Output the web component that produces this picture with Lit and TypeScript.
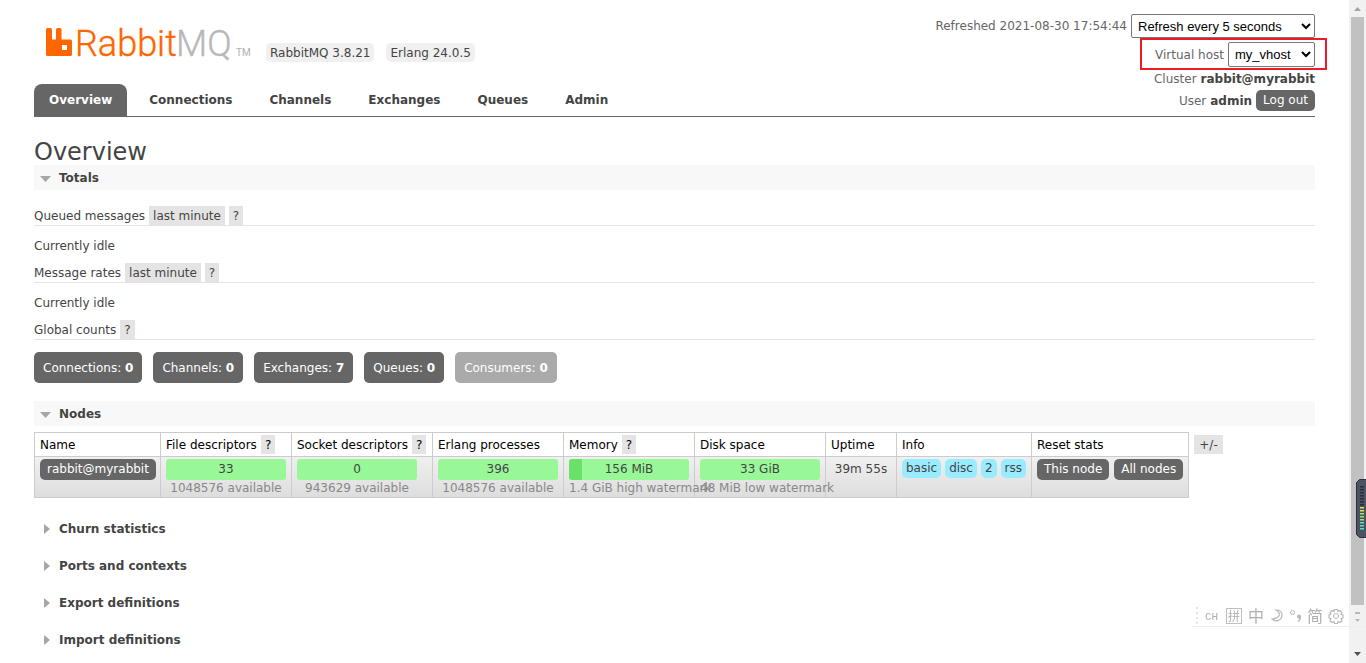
import { LitElement, html, css, svg, nothing } from "lit";
import { customElement, property, state } from "lit/decorators.js";
import { classMap } from "lit/directives/class-map.js";

const TABS = ["Overview", "Connections", "Channels", "Exchanges", "Queues", "Admin"];

const COUNTS = [
  { label: "Connections", value: 0 },
  { label: "Channels", value: 0 },
  { label: "Exchanges", value: 7 },
  { label: "Queues", value: 0 },
  { label: "Consumers", value: 0, disabled: true },
];

const COLUMNS = [
  { title: "Name", cls: "c-name" },
  { title: "File descriptors", help: true, cls: "c-bar" },
  { title: "Socket descriptors", help: true, cls: "c-socket" },
  { title: "Erlang processes", cls: "c-bar" },
  { title: "Memory", help: true, cls: "c-bar" },
  { title: "Disk space", cls: "c-bar" },
  { title: "Uptime", cls: "c-uptime" },
  { title: "Info", cls: "c-info" },
  { title: "Reset stats", cls: "c-reset" },
];

const BARS = [
  { value: "33", note: "1048576 available", used: 0 },
  { value: "0", note: "943629 available", used: 0 },
  { value: "396", note: "1048576 available", used: 0 },
  { value: "156 MiB", note: "1.4 GiB high watermark", used: 11 },
  { value: "33 GiB", note: "48 MiB low watermark", used: 0 },
];

const CLOSED = ["Churn statistics", "Ports and contexts", "Export definitions", "Import definitions"];

@customElement("section-heading")
class SectionHeading extends LitElement {
  @property() label = "";
  @property({ type: Boolean }) open = false;

  static styles = css`
    :host { display: block; }
    .heading { margin: 0; font-size: 12px; line-height: 25px; }
    .toggle {
      display: flex; align-items: center; box-sizing: border-box; width: 100%; height: 25px;
      margin: 0; padding: 2px 0 0 6px; border: 0; gap: 8px; background: none;
      font: bold 12px/23px "DejaVu Sans", Verdana, sans-serif; color: #444;
      text-align: left; cursor: pointer;
    }
    .toggle.open { background: #f8f8f8; }
    .arrow { width: 11px; height: 12px; fill: #a6a6a6; }
  `;

  render() {
    return html`<h2 class="heading">
      <button class=${classMap({ toggle: true, open: this.open })} aria-expanded=${this.open}>
        <svg class="arrow" viewBox="0 0 11 12" aria-hidden="true">
          <path d=${this.open ? "M0 3h11L5.5 9z" : "M4 0l6 5L4 10z"} />
        </svg>${this.label}
      </button>
    </h2>`;
  }
}

@customElement("scroll-rail")
class ScrollRail extends LitElement {
  static styles = css`
    :host { display: flex; flex-direction: column; align-items: center; background: #f1f1f1; }
    .end { width: 17px; height: 17px; }
    .thumb { width: 13px; flex: 1; background: #c1c1c1; }
    .rest { height: 41px; }
  `;

  render() {
    return html`
      <svg class="end" viewBox="0 0 17 17"><path fill="#a3a3a3" d="M5 11h7L8.5 7z" /></svg>
      <div class="thumb"></div>
      <div class="rest"></div>
      <svg class="end" viewBox="0 0 17 17"><path fill="#505050" d="M5 6h7l-3.500 4z" /></svg>
    `;
  }
}

@customElement("app-root")
class AppRoot extends LitElement {
  @state() private tab = "Overview";

  static styles = css`
    :host {
      display: flex; min-height: 100vh; background: #fff; color: #444;
      font: 12px/20px "DejaVu Sans", Verdana, sans-serif;
    }
    * { box-sizing: border-box; }
    .page { flex: 1; min-width: 0; padding: 14px 34px 10px; }
    .rail { flex: none; width: 17px; }

    .header { display: flex; justify-content: space-between; border-bottom: 1px solid #666; }
    .left { display: flex; flex-direction: column; justify-content: space-between; }
    .brand { display: flex; align-items: flex-end; padding-top: 8px; }
    .logo { display: block; width: 220px; height: 42px; }
    .logo-text { font-family: Roboto, sans-serif; font-size: 36px; font-weight: 300; stroke-width: 0.4px; }
    .rabbit { fill: #f60; stroke: #f60; }
    .mq { fill: #b8b8b8; stroke: #b8b8b8; }
    .logo-tm { font-family: Roboto, sans-serif; font-size: 10px; fill: #b0b0b0; }
    .versions { display: flex; gap: 12px; padding: 0 0 2px 12px; }
    .chip { height: 19px; padding: 0 4px; border-radius: 5px; background: #f0f0f0; line-height: 21px; }
    .tabs { display: flex; gap: 7px; margin: 0; padding: 0; list-style: none; }
    .tab {
      display: block; height: 32px; padding: 0 15px; border-radius: 8px 8px 0 0;
      font-weight: bold; line-height: 33px; color: #444; text-decoration: none;
    }
    .tab.active { background: #666; color: #fff; }

    .status { display: flex; flex-direction: column; align-items: flex-end; color: #666; padding-bottom: 5px; }
    .status-row { display: flex; align-items: center; gap: 4px; }
    .status-row b { color: #444; }
    .vhost { position: relative; height: 25px; margin: 4px 0 2px; }
    .mark { position: absolute; inset: -4px -12px -3px -15px; border: 2px solid #ed1c24; pointer-events: none; }
    .select {
      height: 24px; padding: 0 2px; border: 1px solid #767676; border-radius: 2px;
      background: #fff; color: #000; font: 13px "Liberation Sans", Arial, sans-serif;
    }
    .refresh { width: 184px; }
    .host { width: 87px; height: 25px; }
    .user { padding-top: 1px; }
    .btn {
      display: inline-block; height: 21px; padding: 0 7px; border: 0; border-radius: 5px; background: #666;
      color: #fff; font: 12px/21px "DejaVu Sans", Verdana, sans-serif; white-space: nowrap;
      text-decoration: none; cursor: pointer;
    }

    .title { margin: 22px 0 0; font-size: 24px; font-weight: normal; line-height: 26px; }
    .sub {
      display: flex; gap: 4px; height: 20px; margin: 0; border-bottom: 1px solid #e4e4e4;
      font-size: 12px; font-weight: normal; line-height: 21px;
    }
    .sub.first { margin-top: 16px; }
    .idle { margin: 0; padding: 10px 0 7px; }
    .tag {
      height: 19px; padding: 1px 4px 0; border: 0; background: #e4e4e4; color: #444;
      font: 12px/19px "DejaVu Sans", Verdana, sans-serif; cursor: pointer;
    }
    .counts { display: flex; gap: 11px; margin: 12px 0 18px; }
    .count {
      height: 31px; padding: 0 9px; border-radius: 5px; background: #666; color: #fff;
      line-height: 32px; text-decoration: none;
    }
    .count.disabled { background: #aaa; }

    .nodes { display: flex; align-items: flex-start; gap: 5px; margin: 6px 0 18px; }
    .nodes > .tag { min-width: 29px; margin-top: 3px; }
    .table { width: 1155px; table-layout: fixed; border-collapse: collapse; }
    .c-name { width: 126px; }
    .c-bar { width: 131px; }
    .c-socket { width: 141px; }
    .c-uptime { width: 71px; }
    .c-info { width: 135px; }
    .c-reset { width: 157px; }
    th, td { border: 1px solid #ccc; padding: 2px 5px; text-align: left; font-weight: normal; white-space: nowrap; }
    th { height: 24px; padding: 2px 0 2px 5px; color: #000; line-height: 21px; }
    th .group { height: 19px; }
    th .tag { color: #000; }
    td { height: 41px; padding: 2px 0 0 5px; vertical-align: top; }
    .row { background: linear-gradient(#f0f0f0, #ddd); }
    .group { display: flex; gap: 4px; }
    .resets { gap: 5px; }
    .gauge { width: 120px; }
    .bar { position: relative; height: 21px; border-radius: 3px; background: #98f898; overflow: hidden; line-height: 21px; text-align: center; }
    .used { position: absolute; inset: 0 auto 0 0; background: #6ae26a; }
    .val { position: relative; }
    .note { line-height: 16px; color: #888; text-align: center; }
    .uptime { text-align: center; padding-left: 0; }
    .info { height: 19px; padding: 0 4px; border-radius: 5px; background: #99ebff; line-height: 19px; }
    .closed { display: flex; flex-direction: column; gap: 12px; }

    .gadget { position: fixed; right: 0; top: 479px; width: 10px; height: 59px; }
    .ime { position: fixed; right: 0; bottom: 36px; width: 174px; height: 24px; }
    .ime text { font-family: "Noto Sans CJK SC", sans-serif; fill: #b0b0b0; }
    .ime .lang { font-family: "Liberation Mono", monospace; }
  `;

  private logo() {
    return html`<svg class="logo" viewBox="0 0 220 42" role="img" aria-label="RabbitMQ">
      <path fill="#f60" fill-rule="evenodd" d="M13.500 6h3a1.500 1.500 0 0 1 1.500 1.500v10h4V7.500a1.500 1.500 0 0 1 1.500-1.500h2.500a1.500 1.500 0 0 1 1.500 1.500v10h9a1.500 1.500 0 0 1 1.500 1.500v13.500a1.500 1.500 0 0 1-1.500 1.500h-23a1.500 1.500 0 0 1-1.500-1.500V7.500a1.500 1.500 0 0 1 1.500-1.500zm14.500 17v5h5v-5z" />
      <text class="logo-text rabbit" x="41" y="34">Rabbit</text>
      <text class="logo-text mq" x="142" y="34">MQ</text>
      <text class="logo-tm" x="202" y="34">TM</text>
    </svg>`;
  }

  private gadget() {
    return html`<svg class="gadget" viewBox="0 0 10 59" aria-hidden="true">
      <path fill="#4d5263" stroke="#2e313c" d="M11 .5H3.500L.5 3.500v52l3 3H11z" />
      ${Array.from({ length: 15 }, (_, i) => {
        const fill = i < 7 ? "#2b2e38" : i < 9 ? "#e3e04f" : i < 12 ? "#9ce070" : "#4fe0c0";
        return svg`<rect x="4" y=${7 + i * 3} width="4" height="1.500" fill=${fill} />`;
      })}
    </svg>`;
  }

  private ime() {
    return html`<svg class="ime" viewBox="0 0 174 24" aria-hidden="true">
      <path stroke="#eee" d="M0 23.500h174" />
      <path stroke="#e4e4e4" stroke-width="2" stroke-dasharray="2 3" d="M5 4v19" />
      <text class="lang" x="13" y="17" font-size="11">CH</text>
      <rect x="34.500" y="5.500" width="15" height="15" fill="none" stroke="#c0c0c0" />
      <text x="36" y="18" font-size="12">拼</text>
      <text x="56" y="19" font-size="16">中</text>
      <path fill="none" stroke="#b8b8b8" stroke-width="1.200" d="M84 7c5 3 5 8-4 9 4 4 10 1 10-4 0-3-2-5-6-5z" />
      <circle cx="100.500" cy="9.500" r="2" fill="none" stroke="#b8b8b8" />
      <path fill="#b8b8b8" d="M105 13.500a2 2 0 1 1 4 0c0 3-1 4.500-3 5.500l-.5-1c1-.5 1.500-1.500 1.500-2.500a2 2 0 0 1-2-2z" />
      <text x="115" y="19" font-size="16">简</text>
      <circle cx="144" cy="13" r="2.500" fill="none" stroke="#b8b8b8" />
      <path fill="none" stroke="#b8b8b8" stroke-width="1.200" stroke-linejoin="round" d="M142.500 6.500h3l.5 2 2-1 2 2-1 2 2 .5v3l-2 .5 1 2-2 2-2-1-.5 2h-3l-.5-2-2 1-2-2 1-2-2-.5v-3l2-.5-1-2 2-2 2 1z" />
      <path fill="#b8b8b8" d="M163 9h5v2h-5zM163 16h5l-2.500 3z" />
    </svg>`;
  }

  render() {
    const help = html`<button class="tag" aria-label="Help">?</button>`;
    return html`
      <div class="page">
        <header class="header">
          <div class="left">
            <div class="brand">
              ${this.logo()}
              <div class="versions"><span class="chip">RabbitMQ 3.8.21</span><span class="chip">Erlang 24.0.5</span></div>
            </div>
            <nav>
              <ul class="tabs">
                ${TABS.map((t) => html`<li><a class=${classMap({ tab: true, active: t === this.tab })} href="#" @click=${(e: Event) => { e.preventDefault(); this.tab = t; }}>${t}</a></li>`)}
              </ul>
            </nav>
          </div>
          <div class="status">
            <div class="status-row">
              <label for="refresh">Refreshed 2021-08-30 17:54:44</label>
              <select class="select refresh" id="refresh"><option>Refresh every 5 seconds</option></select>
            </div>
            <div class="status-row vhost">
              <label for="vhost">Virtual host</label>
              <select class="select host" id="vhost"><option>my_vhost</option></select>
              <span class="mark"></span>
            </div>
            <div class="status-row">Cluster <b>rabbit@myrabbit</b></div>
            <div class="status-row user">User <b>admin</b> <button class="btn">Log out</button></div>
          </div>
        </header>

        <main>
          <h1 class="title">Overview</h1>
          <section-heading label="Totals" open></section-heading>
          <h3 class="sub first">Queued messages <button class="tag">last minute</button>${help}</h3>
          <p class="idle">Currently idle</p>
          <h3 class="sub">Message rates <button class="tag">last minute</button>${help}</h3>
          <p class="idle">Currently idle</p>
          <h3 class="sub">Global counts ${help}</h3>
          <div class="counts">
            ${COUNTS.map((c) => html`<a class=${classMap({ count: true, disabled: !!c.disabled })} href="#">${c.label}: <b>${c.value}</b></a>`)}
          </div>

          <section-heading label="Nodes" open></section-heading>
          <div class="nodes">
            <table class="table">
              <colgroup>${COLUMNS.map((c) => html`<col class=${c.cls} />`)}</colgroup>
              <thead>
                <tr>${COLUMNS.map((c) => html`<th scope="col"><div class="group">${c.title}${c.help ? help : nothing}</div></th>`)}</tr>
              </thead>
              <tbody>
                <tr class="row">
                  <td><a class="btn" href="#">rabbit@myrabbit</a></td>
                  ${BARS.map((b) => html`<td>
                    <div class="gauge">
                      <div class="bar">${b.used ? html`<span class="used" style="width:${b.used}%"></span>` : nothing}<span class="val">${b.value}</span></div>
                      <div class="note">${b.note}</div>
                    </div>
                  </td>`)}
                  <td class="uptime">39m 55s</td>
                  <td><div class="group">${["basic", "disc", "2", "rss"].map((t) => html`<span class="info">${t}</span>`)}</div></td>
                  <td><div class="group resets"><button class="btn">This node</button><button class="btn">All nodes</button></div></td>
                </tr>
              </tbody>
            </table>
            <button class="tag">+/-</button>
          </div>

          <div class="closed">${CLOSED.map((s) => html`<section-heading label=${s}></section-heading>`)}</div>
        </main>
      </div>
      <scroll-rail class="rail" aria-hidden="true"></scroll-rail>
      ${this.gadget()}${this.ime()}
    `;
  }
}
